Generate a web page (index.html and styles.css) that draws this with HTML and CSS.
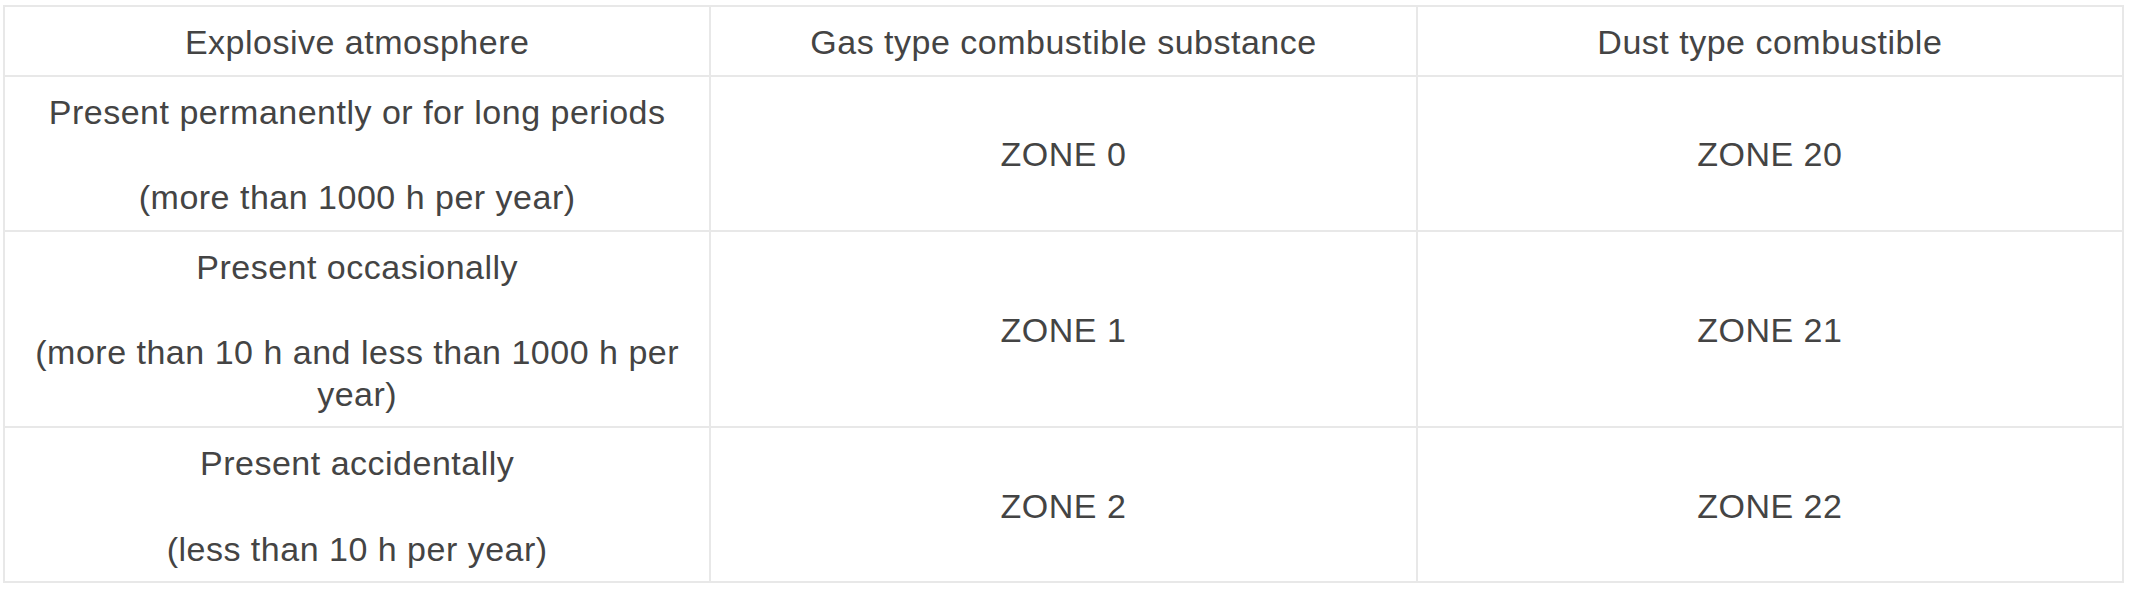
FILE: index.html
```html
<!DOCTYPE html>
<html>
<head>
<meta charset="utf-8">
<link rel="stylesheet" href="styles.css">
</head>
<body>
<div class="wrap">
<table class="zones">
<colgroup><col class="c"><col class="c"><col class="c"></colgroup>
<tr><td>Explosive atmosphere</td><td>Gas type combustible substance</td><td>Dust type combustible</td></tr>
<tr><td><p>Present permanently or for long periods</p><p>(more than 1000 h per year)</p></td><td>ZONE 0</td><td>ZONE 20</td></tr>
<tr><td><p>Present occasionally</p><p>(more than 10 h and less than 1000 h per year)</p></td><td>ZONE 1</td><td>ZONE 21</td></tr>
<tr><td><p>Present accidentally</p><p>(less than 10 h per year)</p></td><td>ZONE 2</td><td>ZONE 22</td></tr>
</table>
</div>
</body>
</html>
```
FILE: styles.css
```css
html, body { margin: 0; padding: 0; background: #fff; }
.wrap { padding: 5px 0 0 3px; }
.zones {
  border-collapse: collapse;
  table-layout: fixed;
  width: 2121px;
  font-family: "Liberation Sans", Arial, sans-serif;
  font-size: 34px;
  line-height: 41.5px;
  letter-spacing: 0.5px;
  color: #444;
}
.zones td {
  border: 2px solid #e8e8e8;
  padding: 15px 20px 11px;
  text-align: center;
  vertical-align: middle;
}
.zones p { margin: 0; }
.zones p + p { margin-top: 44px; }
```
